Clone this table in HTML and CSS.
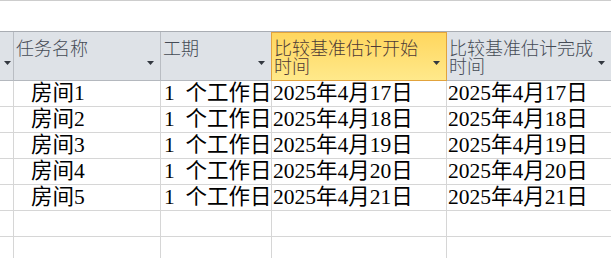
FILE: index.html
```html
<!DOCTYPE html>
<html lang="zh-CN">
<head>
<meta charset="utf-8">
<title>甘特图 - 任务表</title>
<link rel="stylesheet" href="styles.css">
</head>
<body>
<div class="window">
  <div class="toolbar"></div>
  <div class="sheet">
    <div class="hcell"><span class="label"></span><svg class="arrow" width="7" height="4" viewBox="0 0 7 4"><polygon points="0,0 7,0 3.5,4"/></svg></div>
    <div class="hcell"><span class="label">任务名称</span><svg class="arrow" width="7" height="4" viewBox="0 0 7 4"><polygon points="0,0 7,0 3.5,4"/></svg></div>
    <div class="hcell"><span class="label">工期</span><svg class="arrow" width="7" height="4" viewBox="0 0 7 4"><polygon points="0,0 7,0 3.5,4"/></svg></div>
    <div class="hcell active"><span class="label">比较基准估计开始时间</span><svg class="arrow" width="7" height="4" viewBox="0 0 7 4"><polygon points="0,0 7,0 3.5,4"/></svg></div>
    <div class="hcell last"><span class="label">比较基准估计完成时间</span><svg class="arrow" width="7" height="4" viewBox="0 0 7 4"><polygon points="0,0 7,0 3.5,4"/></svg></div>

    <div class="cell"></div><div class="cell name">房间1</div><div class="cell dur">1 个工作日</div><div class="cell date">2025年4月17日</div><div class="cell date">2025年4月17日</div>
    <div class="cell"></div><div class="cell name">房间2</div><div class="cell dur">1 个工作日</div><div class="cell date">2025年4月18日</div><div class="cell date">2025年4月18日</div>
    <div class="cell"></div><div class="cell name">房间3</div><div class="cell dur">1 个工作日</div><div class="cell date">2025年4月19日</div><div class="cell date">2025年4月19日</div>
    <div class="cell"></div><div class="cell name">房间4</div><div class="cell dur">1 个工作日</div><div class="cell date">2025年4月20日</div><div class="cell date">2025年4月20日</div>
    <div class="cell"></div><div class="cell name">房间5</div><div class="cell dur">1 个工作日</div><div class="cell date">2025年4月21日</div><div class="cell date">2025年4月21日</div>
    <div class="cell"></div><div class="cell"></div><div class="cell"></div><div class="cell"></div><div class="cell"></div>
    <div class="cell"></div><div class="cell"></div><div class="cell"></div><div class="cell"></div><div class="cell"></div>
  </div>
</div>
</body>
</html>
```

FILE: styles.css
```css
html, body {
  margin: 0;
  padding: 0;
  background: #ffffff;
}

.window {
  width: 611px;
  height: 258px;
  overflow: hidden;
  border-top: 1px solid #cdcdcd;
  box-sizing: border-box;
}

.toolbar {
  height: 30px;
  background: #ffffff;
}

.sheet {
  display: grid;
  grid-template-columns: 14px 147px 111px 175px 165px;
  grid-template-rows: 49px repeat(7, 26px);
  border-top: 1px solid #a9adb3;
  width: 612px;
}

/* header row */
.hcell {
  display: flex;
  align-items: flex-start;
  box-sizing: border-box;
  background: #dee2e7;
  border-right: 1px solid #b9bdc3;
  border-bottom: 1px solid #b4b8be;
  padding: 7px 6px 0 2px;
  font-family: "Noto Sans CJK SC", "Liberation Sans", sans-serif;
  font-size: 18px;
  font-weight: 300;
  line-height: 17.5px;
  color: #454b55;
  overflow: hidden;
}

.hcell .label {
  flex: 1;
  min-width: 0;
}

.hcell .arrow {
  flex: none;
  align-self: center;
  margin-top: 6px;
  margin-left: 2px;
  fill: #333840;
}

.hcell.active {
  background: linear-gradient(#ffd65d, #ffe98b);
  border-right-color: #e2a33c;
  border-bottom-color: #e2a33c;
  box-shadow: -1px 0 0 #e2a33c, inset 0 1px 0 #e2a33c;
  color: #4e3a36;
}

/* data rows */
.cell {
  box-sizing: border-box;
  border-right: 1px solid #d6d6d6;
  border-bottom: 1px solid #d6d6d6;
  font-family: "Liberation Serif", "Noto Sans CJK SC", serif;
  font-size: 21.5px;
  line-height: 25px;
  color: #000000;
  white-space: nowrap;
  overflow: hidden;
  word-spacing: 0.25em;
}

.cell.name {
  padding-left: 17px;
}

.cell.dur {
  padding-left: 3px;
}

.cell.date {
  padding-left: 1px;
}
```
